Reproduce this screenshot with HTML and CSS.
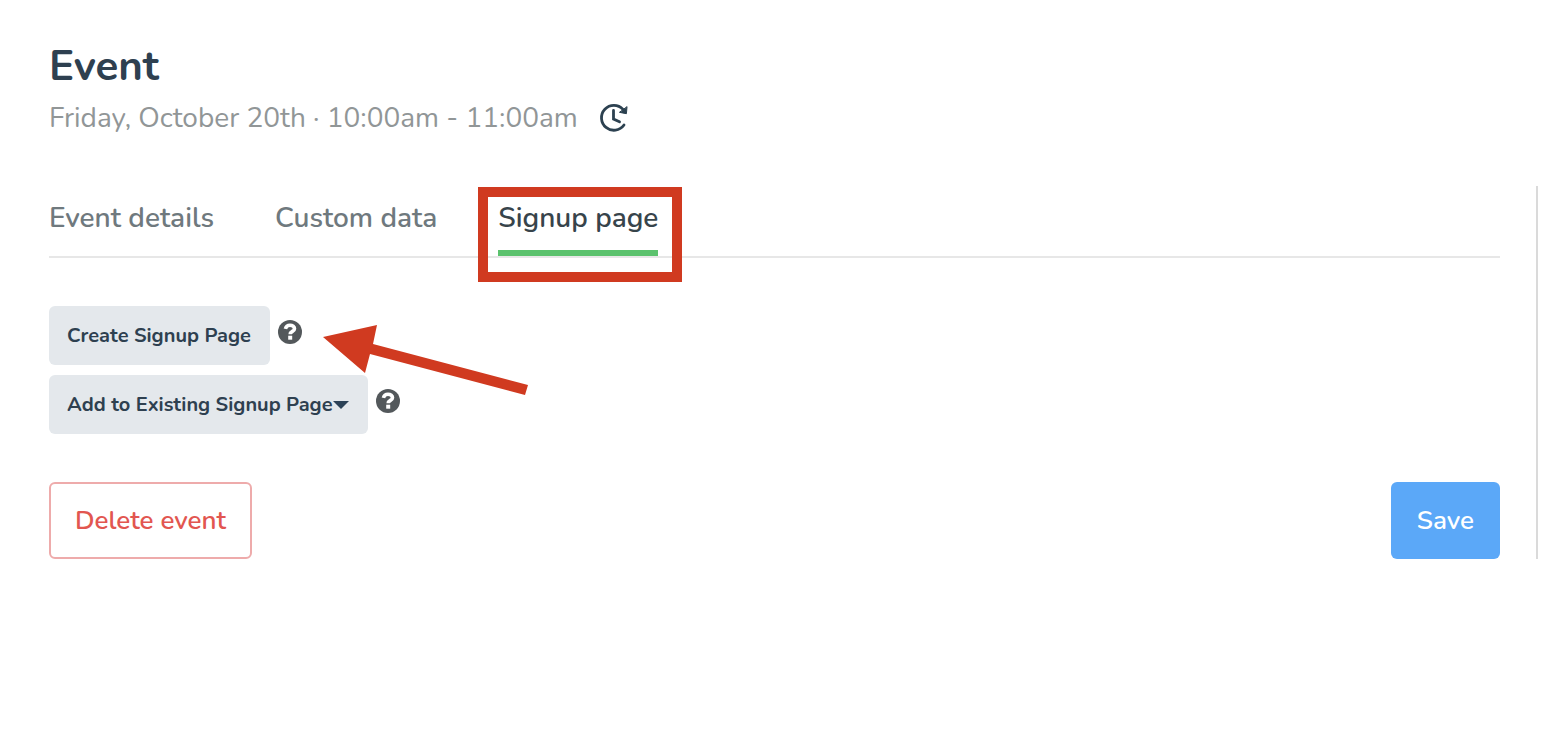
FILE: index.html
```html
<!DOCTYPE html>
<html lang="en">
<head>
    <meta charset="UTF-8" />
    <meta name="viewport" content="width=device-width, initial-scale=1" />
    <title>Event</title>
    <link rel="stylesheet" href="styles.css">
</head>
<body>
    <header class="event-header">
        <h1>Event</h1>
        <div class="event-time">
            <span>Friday, October 20th · 10:00am - 11:00am</span>
            <svg class="clock-icon" viewBox="0 0 30 30" width="30" height="30" aria-hidden="true">
                <path d="M24 6.400A12.400 12.400 0 1 0 25 22" />
                <path d="M14.500 7.500v8.500l6 2.800" />
                <path class="clock-arrow" d="M28 4l-.6 6.700-6.600-1.300z" />
            </svg>
        </div>
    </header>
    <main class="event-panel">
        <nav class="tabs">
            <a class="tab" href="#details">Event details</a>
            <a class="tab" href="#custom">Custom data</a>
            <a class="tab active" href="#signup">Signup page<span class="highlight"></span></a>
        </nav>
        <div class="signup-options">
            <div class="option">
                <button class="option-btn" type="button">Create Signup Page</button>
                <button class="help-btn" type="button" aria-label="Help with creating a page">
                    <svg viewBox="0 0 24 24" width="24" height="24">
                        <circle cx="12" cy="12" r="12" />
                        <path d="M7.400 8.900C8 6.600 9.600 5.300 12 5.300c2.600 0 4.500 1.300 4.500 3.400 0 2.800-4.300 2.600-4.300 5.500" />
                        <rect x="10.200" y="15.700" width="4" height="4" />
                    </svg>
                </button>
                <svg class="pointer-arrow" viewBox="0 0 206 72" width="206" height="72" aria-hidden="true">
                    <path d="M1 12L55 0l-4 19 155 41-3 10L48 29l-5 19z" />
                </svg>
            </div>
            <div class="option">
                <button class="option-btn" type="button">Add to Existing Signup Page<span class="caret"></span></button>
                <button class="help-btn" type="button" aria-label="Help with existing pages">
                    <svg viewBox="0 0 24 24" width="24" height="24">
                        <circle cx="12" cy="12" r="12" />
                        <path d="M7.400 8.900C8 6.600 9.600 5.300 12 5.300c2.600 0 4.500 1.300 4.500 3.400 0 2.800-4.300 2.600-4.300 5.500" />
                        <rect x="10.200" y="15.700" width="4" height="4" />
                    </svg>
                </button>
            </div>
        </div>
        <div class="actions">
            <button class="action-btn delete-btn" type="button">Delete event</button>
            <button class="action-btn save-btn" type="button">Save</button>
        </div>
    </main>
</body>
</html>
```
FILE: styles.css
```css
* {
    box-sizing: border-box;
}
body {
    margin: 0;
    padding: 36px 18px 36px 49px;
    background: #fff;
    color: #2e4050;
    font-family: Nunito, "Noto Sans", sans-serif;
}
button {
    font-family: inherit;
    cursor: pointer;
}
.event-header {
    margin-bottom: 48px;
}
h1 {
    margin: 0;
    font-size: 42px;
    line-height: 62px;
    font-weight: 700;
}
.event-time {
    display: flex;
    align-items: center;
    gap: 21px;
    color: #919697;
    font-size: 28px;
    line-height: 40px;
}
.clock-icon {
    fill: none;
    stroke: #2c4150;
    stroke-width: 2.8;
    stroke-linecap: round;
}
.clock-icon .clock-arrow {
    fill: #2c4150;
    stroke-width: 1;
    stroke-linejoin: round;
}
.event-panel {
    padding-right: 36px;
    border-right: 2px solid #dadada;
}
.tabs {
    display: flex;
    gap: 61px;
    border-bottom: 2px solid #e7e7e7;
}
.tab {
    position: relative;
    border-bottom: 6px solid transparent;
    color: #6f797e;
    font-size: 28px;
    line-height: 64px;
    font-weight: 600;
    text-decoration: none;
}
.tab.active {
    border-bottom-color: #5bc26d;
    color: #37444b;
}
/* red frame round the current tab */
.highlight {
    position: absolute;
    top: 1px;
    left: -20px;
    right: -24px;
    height: 95px;
    border: 10px solid #d03a20;
}
.signup-options {
    display: flex;
    flex-direction: column;
    gap: 10px;
    margin: 48px 0;
}
.option {
    display: flex;
    align-items: flex-start;
    gap: 8px;
    position: relative;
}
.option-btn {
    display: flex;
    align-items: center;
    padding: 16px 19px 16px 18px;
    border: none;
    border-radius: 6px;
    background: #e4e8ec;
    color: #2e4050;
    font-size: 20px;
    line-height: 27px;
    font-weight: 700;
}
.caret {
    border: 8px solid transparent;
    border-top-color: #2c4257;
    border-bottom: none;
}
.help-btn {
    padding: 14px 0;
    border: none;
    background: none;
}
.help-btn svg {
    display: block;
    fill: #53585b;
}
.help-btn path {
    fill: none;
    stroke: #fff;
    stroke-width: 3.6;
}
.help-btn rect {
    fill: #fff;
}
.pointer-arrow {
    position: absolute;
    top: 19px;
    left: 273px;
    fill: #d03a20;
}
.actions {
    display: flex;
    justify-content: space-between;
}
.action-btn {
    padding: 20px 24px;
    border: 2px solid transparent;
    border-radius: 6px;
    font-size: 26px;
    line-height: 33px;
    font-weight: 650;
}
.delete-btn {
    border-color: #eeabab;
    background: #fff;
    color: #e25650;
}
.save-btn {
    background: #5ba8f8;
    color: #fff;
}
```
